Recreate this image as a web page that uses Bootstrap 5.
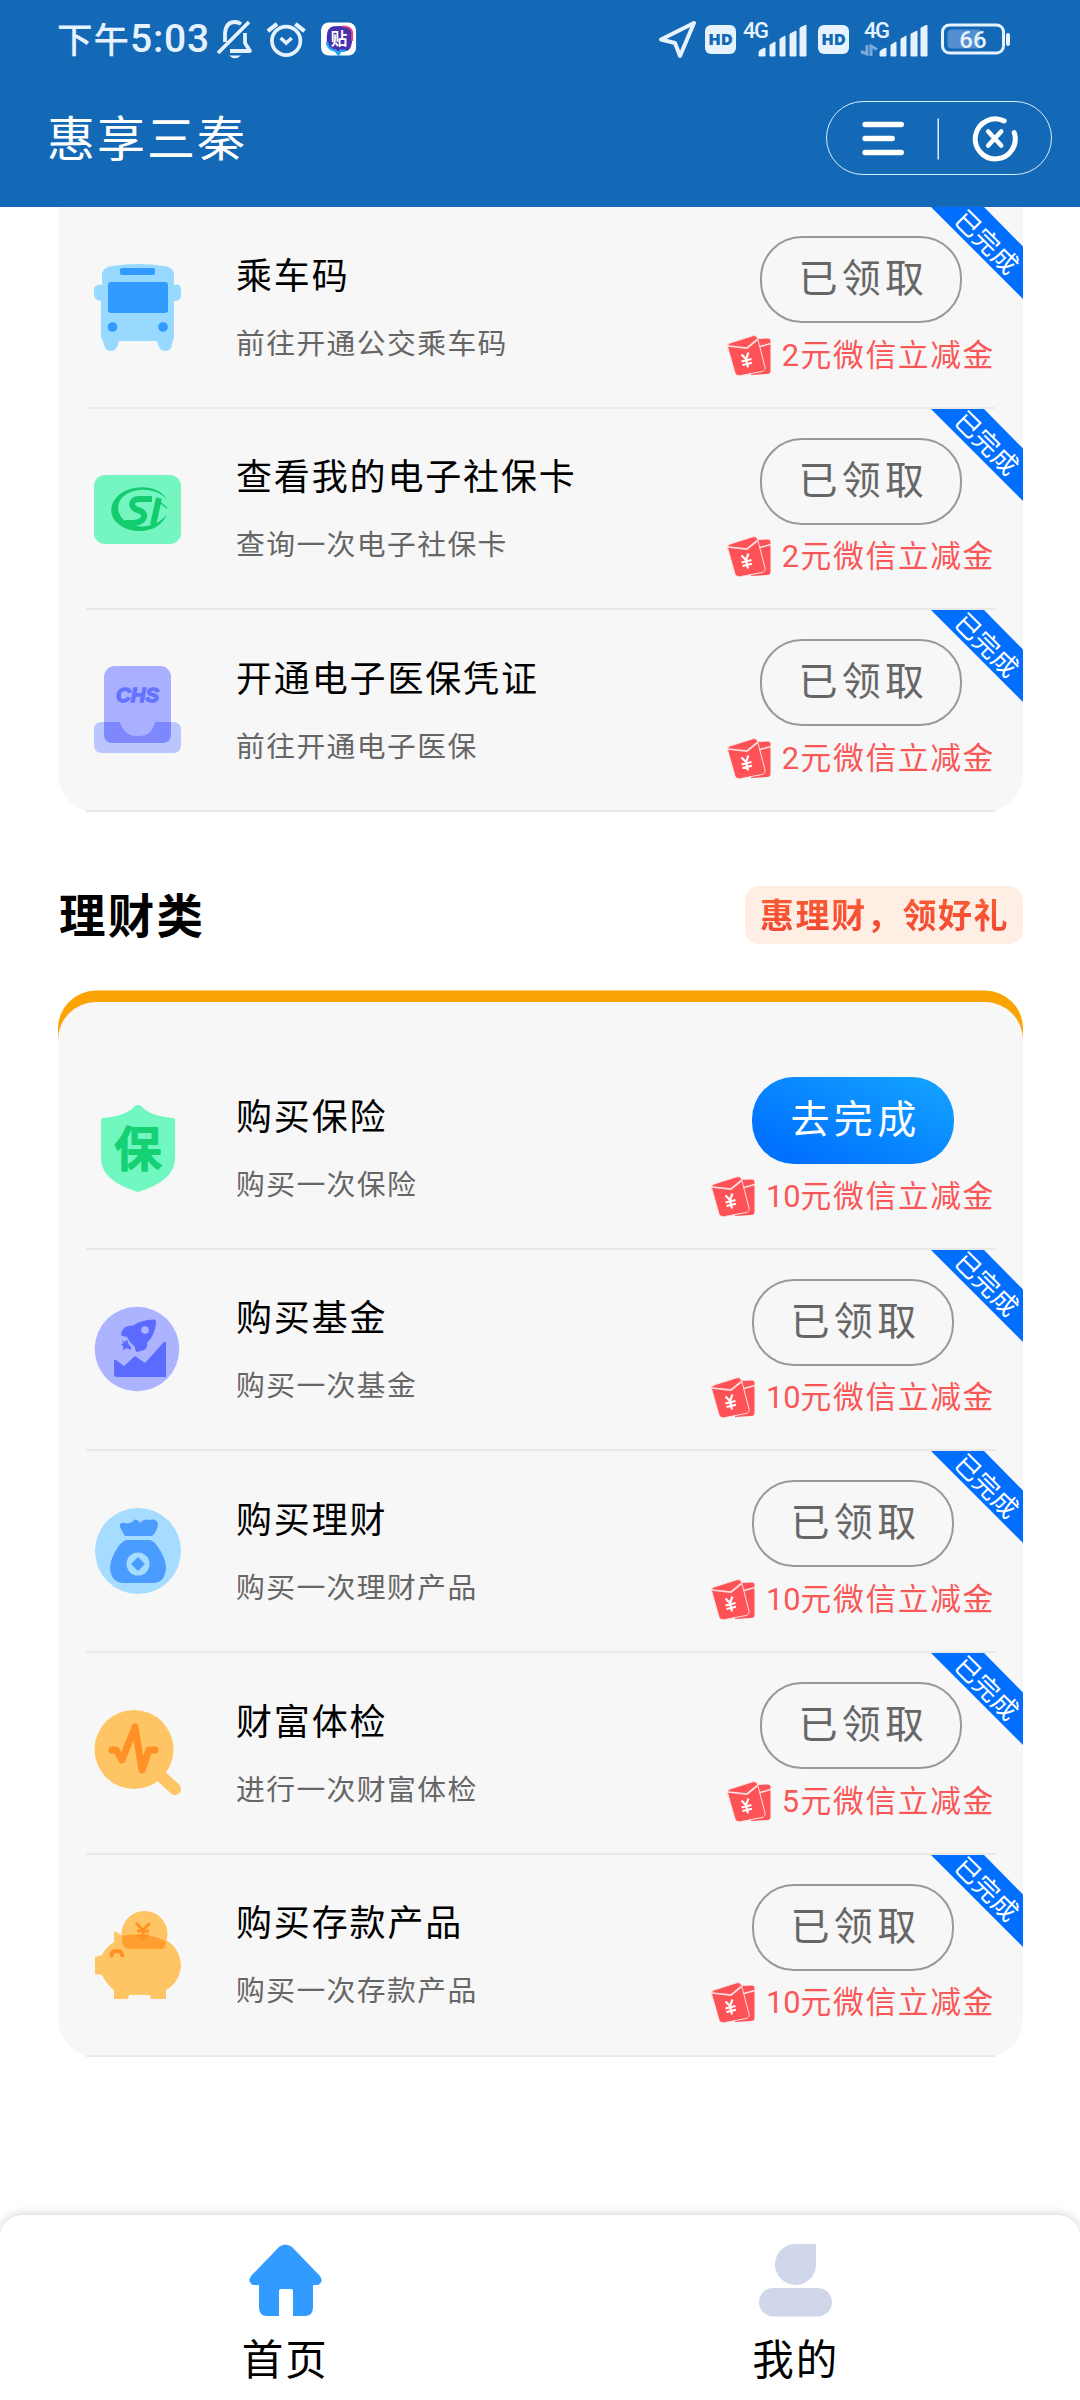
<!DOCTYPE html>
<html lang="zh-CN">
<head>
<meta charset="utf-8">
<meta name="viewport" content="width=device-width, initial-scale=1">
<title>惠享三秦</title>
<link href="https://cdn.jsdelivr.net/npm/bootstrap@5.3.0/dist/css/bootstrap.min.css" rel="stylesheet">
<style>
body{font-family:"Noto Sans CJK SC",sans-serif;color:#000;background:#fff;line-height:1;width:1080px;height:2400px;overflow:hidden}
svg{display:block;flex:none;overflow:visible}
.app-top{background:#1369b6;height:207px;color:#fff;flex:none}
.status-row{height:78px;padding:0 68px 0 57px;color:#e6f2fe}
.clock-zh{font-size:35.5px;font-weight:500;letter-spacing:1px;padding-bottom:2px}
.clock-num{font-family:Roboto,sans-serif;font-size:39px;letter-spacing:.8px;font-weight:500}
.hd-chip{width:31px;height:29px;border-radius:6px;background:#e6f2fe;color:#1369b6;font:800 16.5px/28px "Open Sans",sans-serif;text-align:center}
.title-row{height:120px;padding:0 28px 0 47px}
.app-title{font-size:48px;letter-spacing:2px;font-weight:400;padding-bottom:5px}
.capsule{width:226px;height:74px;border:1.5px solid #d5ecff;border-radius:37px}
.task-panel{margin:0 57px 0 58px;background:#f7f7f7}
.panel-first{border-radius:0 0 38px 38px}
.panel-finance{margin-top:58px;box-shadow:0 -11.5px 0 #faa302;border-radius:38px;padding-top:46px}
.task-row{height:201.7px;padding:0 28px}
.task-body{height:100%;border-bottom:2px solid #e9e9e9;padding-left:8px}
.task-ic{margin-top:56px}
.task-text{margin-left:54px;padding-top:44.5px}
.task-name{font-size:36px;line-height:42px;letter-spacing:1.85px}
.task-desc{font-size:28.8px;line-height:36px;letter-spacing:1.4px;color:#666;margin-top:30px}
.task-side{padding-top:29px}
.pill{width:202px;height:87px;border-radius:42px;padding:0 0 9px 5px;font-size:39px;letter-spacing:4.3px;line-height:70px;border:2px solid #999;color:#666;background:transparent;display:block}
.pill-go{border:0;color:#fff;background:linear-gradient(25deg,#0071ff 15%,#13a2ff 95%)}
.reward{font-family:Roboto,"Noto Sans CJK SC",sans-serif;color:#fa5757;font-size:30.8px;letter-spacing:1.6px;margin-top:11.5px;height:42px;line-height:42px}
.reward-wide{letter-spacing:0}
.reward-wide span{letter-spacing:1.6px}
.ribbon{top:0;right:0;width:92px;height:92px}
.ribbon span{left:17.500px;top:20.500px;width:78px;height:26px;line-height:26px;text-align:center;transform:rotate(45deg);color:#fff;font-size:25.5px;letter-spacing:.5px;white-space:nowrap}
.section-head{margin:74px 57px 0 59px;height:58px}
.section-name{font-size:46.5px;letter-spacing:2.2px;font-weight:700;padding-bottom:4px}
.slogan{width:278px;height:58px;border-radius:14px;background:#ffeee4;font-size:34px;letter-spacing:1.6px;font-weight:700;line-height:56px;padding-left:15px}
.slogan span{background:linear-gradient(#fb6133,#f24434);-webkit-background-clip:text;background-clip:text;color:transparent}
.tabs{height:185px;border-radius:22px 22px 0 0;box-shadow:0 -2px 8px rgba(0,0,0,.15);padding:0 29px 0 30px;background:#fff}
.tab{padding-top:29px;font-size:41.5px;letter-spacing:2px}
.tab span{line-height:50px;margin-top:15px}
</style>
<script src="https://cdn.jsdelivr.net/npm/bootstrap@5.3.0/dist/js/bootstrap.bundle.min.js"></script>
</head>
<body class="d-flex flex-column">
<svg width="0" height="0" class="position-absolute">
 <symbol id="packet" viewBox="0 0 44 42">
  <path d="M27 4L41 3.500Q43.500 3.500 43.500 6V36Q43.500 39 40 39L24 40Z" fill="#ff5257"/>
  <path d="M31 12L44 8.500" stroke="#fbe3e3" stroke-width="1.500"/>
  <path d="M3 8L26 .7Q29.500 0 30.500 3L38 32Q38.700 35.500 35 36.500L12.500 40.800Q9 41 8 38L.6 12Q0 9 3 8Z" fill="#ff5257" stroke="#fbe3e3" stroke-width="1"/>
  <path d="M1 11L20 13L30.500 4.500" fill="none" stroke="#fbe3e3" stroke-width="1.700"/>
  <path d="M14.500 19.500L19 24L21.500 17.500M14.500 26.500L24.500 24M15.500 30L25 27.700M19 24L21 32.500" fill="none" stroke="#fff" stroke-width="2.100"/>
 </symbol>
 <symbol id="band" viewBox="0 0 92 92"><path d="M0 0H53L92 39.500V92Z" fill="#006fff"/></symbol>
 <symbol id="bars" viewBox="0 0 49 32">
  <path d="M1 31V27Q1 25 7 23V31ZM12 31V20L17 17V31ZM22 31V14L27 11V31ZM32 31V9L38 6V31ZM42 31V3L48 0V31Z" fill="#e6f2fe" stroke="#e6f2fe" stroke-linejoin="round"/>
 </symbol>
</svg>

<header class="app-top">
 <div class="status-row d-flex align-items-center">
  <span class="clock-zh">下午</span><span class="clock-num">5:03</span>
  <svg class="ms-2" width="36" height="40" viewBox="1 0 36 40" fill="none" stroke="#e6f2fe" stroke-width="3.800" stroke-linejoin="round"><path d="M8 23V14Q9 3 18 3Q21 3 24 5M28 14V24L33 32H13"/><path d="M1 34L32 3"/><path d="M12 36.500H24Q18 42 12 36.500Z" fill="#e6f2fe" stroke="none"/></svg>
  <svg class="ms-2 ps-1" width="48" height="40" viewBox="2 0 48 40" fill="none" stroke="#e6f2fe" stroke-width="4"><circle cx="24" cy="22" r="15.500"/><path d="M4 11.500L14 3.500M34 3.500L44 11.500" stroke-width="4.500"/><path d="M18 19L24 24.500L30 19" stroke-width="3.800"/></svg>
  <svg class="ms-2 ps-1" width="40" height="36" viewBox="3 0 37 36"><rect x="2" y="1" width="36" height="34" rx="8" fill="#fff"/><path d="M15 5Q33 3 34 10Q35 28 29 30L20 31L13 29Q7 27 8 15Q8 6 15 5Z" fill="#4931ad"/><path d="M24 5Q34 5 34 12V20" fill="none" stroke="#e4487c" stroke-width="2"/><path d="M8 21Q9 29 17 30L20 34L22 30H27" fill="none" stroke="#20a6f2" stroke-width="2.500"/><text x="20.500" y="24" font-size="17" text-anchor="middle" fill="#fff" font-weight="700" font-family="Noto Sans CJK SC">贴</text></svg>
  <div class="d-flex align-items-center ms-auto">
   <svg width="40" height="40" viewBox="-1 0 40 40"><path d="M3 20.500L36 4L22 37L17 24Z" fill="none" stroke="#e6f2fe" stroke-width="4" stroke-linejoin="round"/></svg>
   <div class="hd-chip ms-2">HD</div>
   <svg class="ms-1" width="70" height="40" viewBox="-1 0 70 40"><text x="2" y="18.500" font-size="22" font-weight="500" fill="#e6f2fe" font-family="Roboto" textLength="26">4G</text><use href="#bars" x="17" y="6" width="49" height="32"/></svg>
   <div class="hd-chip ms-2">HD</div>
   <svg class="ms-2 ps-1" width="75" height="40" viewBox="2 0 71 40"><text x="5" y="18.500" font-size="22" font-weight="500" fill="#e6f2fe" font-family="Roboto" textLength="26">4G</text><path d="M8 26V35L2 32.500M12 37V27L18 30.500" fill="none" stroke="#78abd7" stroke-width="3"/><use href="#bars" x="20" y="6" width="49" height="32"/></svg>
   <svg class="ms-2" width="72" height="32" viewBox="-1 0 72 32"><rect x="1.500" y="2" width="61" height="28" rx="7" fill="none" stroke="#e6f2fe" stroke-width="3"/><path d="M11 6.500H39V25.500H11Q6.500 25.500 6.500 21V11Q6.500 6.500 11 6.500Z" fill="#528fd0"/><path d="M67 12V21" stroke="#e6f2fe" stroke-width="4" stroke-linecap="round"/><text x="32" y="24.500" text-anchor="middle" fill="#e6f2fe" font-size="24" font-weight="500" font-family="Roboto">66</text></svg>
  </div>
 </div>
 <div class="title-row d-flex align-items-center justify-content-between">
  <h1 class="app-title m-0">惠享三秦</h1>
  <div class="capsule d-flex align-items-center">
   <svg width="223" height="71" viewBox="1.300 1.500 223 71" fill="none" stroke="#fff"><path d="M39.500 23H75.500M39.500 37H66.500M39.500 51H75.500" stroke-width="5.600" stroke-linecap="round"/><path d="M112.500 17V58" stroke-width="1.300"/><path d="M178.500 19.500A20 20 0 1 0 188.500 31" stroke-width="5" stroke-linecap="round"/><path d="M162.500 30L175.500 44M175.500 30L162.500 44" stroke-width="4.600" stroke-linecap="round"/></svg>
  </div>
 </div>
</header>

<main>
 <section class="task-panel panel-first">
  <div class="task-row position-relative"><div class="task-body d-flex">
   <svg class="task-ic" width="88" height="90" viewBox="0 0 88 90"><path d="M8 10Q10 4 18 3Q44-1 70 3Q78 4 80 10V22Q87 20 87 27V33Q87 38 80 38V74L78 81Q78 88 71 88Q65 88 63 78H25Q23 88 17 88Q11 88 10 81L7 74V38Q0 37 0 31V26Q1 21 8 22Z" fill="#97d9ff"/><rect x="26" y="5" width="35" height="7" rx="2" fill="#329bff"/><rect x="14" y="19" width="60" height="31" rx="3" fill="#329bff"/><circle cx="18.500" cy="64" r="4.800" fill="#329bff"/><circle cx="69" cy="64" r="4.800" fill="#329bff"/></svg>
   <div class="task-text"><div class="task-name">乘车码</div><div class="task-desc">前往开通公交乘车码</div></div>
   <div class="task-side ms-auto d-flex flex-column align-items-center"><button class="btn pill">已领取</button><div class="reward d-flex"><svg class="me-2" width="47" height="42" viewBox="0 0 47 42"><use href="#packet" width="44" height="42"/></svg>2元微信立减金</div></div>
  </div><div class="ribbon position-absolute"><svg width="92" height="92"><use href="#band"/></svg><span class="position-absolute">已完成</span></div></div>

  <div class="task-row position-relative"><div class="task-body d-flex">
   <svg class="task-ic" width="88" height="90" viewBox="0 0 88 90"><rect x="0" y="10" width="87" height="69" rx="11" fill="#75f5c0"/><path d="M73 35C66 19 34 18 22 33C10 48 22 64 43 66C57 67 69 60 73 49C65 61 46 65 34 58C19 49 22 32 37 27C50 22 67 26 73 35Z" fill="#13cc70"/><path d="M58 34H45C36 34 36 43 44 45C55 48 50 58 39 58H31" fill="none" stroke="#13cc70" stroke-width="6"/><path d="M65 33L59 60" stroke="#13cc70" stroke-width="6"/><path d="M62 34L73 43" stroke="#13cc70" stroke-width="1.500"/></svg>
   <div class="task-text"><div class="task-name">查看我的电子社保卡</div><div class="task-desc">查询一次电子社保卡</div></div>
   <div class="task-side ms-auto d-flex flex-column align-items-center"><button class="btn pill">已领取</button><div class="reward d-flex"><svg class="me-2" width="47" height="42" viewBox="0 0 47 42"><use href="#packet" width="44" height="42"/></svg>2元微信立减金</div></div>
  </div><div class="ribbon position-absolute"><svg width="92" height="92"><use href="#band"/></svg><span class="position-absolute">已完成</span></div></div>

  <div class="task-row position-relative"><div class="task-body d-flex">
   <svg class="task-ic" width="88" height="90" viewBox="0 1 88 90"><rect x="10" y="1" width="67" height="77" rx="11" fill="#a9b0ff"/><path d="M8 57H26Q30 71 44 71Q58 71 61 57H79Q87 57 87 65V80Q87 88 79 88H8Q0 88 0 80V65Q0 57 8 57Z" fill="#bbc6ff"/><path d="M10 57H26Q30 71 44 71Q58 71 61 57H77V69Q77 78 68 78H19Q10 78 10 69Z" fill="#7d88ff"/><text x="43.500" y="37" text-anchor="middle" textLength="43" lengthAdjust="spacingAndGlyphs" font-family="Liberation Sans" font-style="italic" font-weight="700" font-size="20" fill="#6472ff" stroke="#6472ff" stroke-width="1.300">CHS</text></svg>
   <div class="task-text"><div class="task-name">开通电子医保凭证</div><div class="task-desc">前往开通电子医保</div></div>
   <div class="task-side ms-auto d-flex flex-column align-items-center"><button class="btn pill">已领取</button><div class="reward d-flex"><svg class="me-2" width="47" height="42" viewBox="0 0 47 42"><use href="#packet" width="44" height="42"/></svg>2元微信立减金</div></div>
  </div><div class="ribbon position-absolute"><svg width="92" height="92"><use href="#band"/></svg><span class="position-absolute">已完成</span></div></div>
 </section>

 <div class="section-head d-flex align-items-center justify-content-between">
  <h2 class="section-name m-0">理财类</h2>
  <div class="slogan"><span>惠理财，领好礼</span></div>
 </div>

 <section class="task-panel panel-finance">
  <div class="task-row position-relative"><div class="task-body d-flex">
   <svg class="task-ic" width="88" height="90" viewBox="0 0 88 90"><path d="M44 1Q47 1 50 5Q61 13 79 14Q81 14 81 17V54Q81 77 44 88Q7 77 7 54V17Q7 14 9 14Q27 13 38 5Q41 1 44 1Z" fill="#71f7c0"/><text x="44" y="61.500" text-anchor="middle" font-size="47" font-weight="500" font-family="Noto Sans CJK SC" fill="#15d174" stroke="#15d174" stroke-width="2" stroke-linejoin="round">保</text></svg>
   <div class="task-text"><div class="task-name">购买保险</div><div class="task-desc">购买一次保险</div></div>
   <div class="task-side ms-auto d-flex flex-column align-items-center"><button class="btn pill pill-go">去完成</button><div class="reward reward-wide d-flex"><svg class="me-2" width="47" height="42" viewBox="0 0 47 42"><use href="#packet" width="44" height="42"/></svg>10<span>元微信立减金</span></div></div>
  </div></div>

  <div class="task-row position-relative"><div class="task-body d-flex">
   <svg class="task-ic" width="88" height="90" viewBox="0 0 88 90"><circle cx="43" cy="43" r="42.300" fill="#adb4ff"/><path d="M60 13.500Q62.500 13.500 62 17Q61 29 53 37Q54 42 50 44L43 46Q41 45.500 41 41L36 36L33 31L27 29.500Q27 22 34 20L39 19.500Q47 14 60 13.500Z" fill="#5b6bff"/><circle cx="51" cy="24" r="3.800" fill="#adb4ff"/><path d="M28 34L31 36L33 33.500L34.500 38L37 41L36.500 44L32.500 42L29 44.500L29.500 40.500L27 38.500L29.500 37Z" fill="#5b6bff"/><path d="M20 55Q20 53 22 54L30 60L41 50L51 57L69 37Q72 34 72 37V71H23Q20 71 20 68Z" fill="#5b6bff"/></svg>
   <div class="task-text"><div class="task-name">购买基金</div><div class="task-desc">购买一次基金</div></div>
   <div class="task-side ms-auto d-flex flex-column align-items-center"><button class="btn pill">已领取</button><div class="reward reward-wide d-flex"><svg class="me-2" width="47" height="42" viewBox="0 0 47 42"><use href="#packet" width="44" height="42"/></svg>10<span>元微信立减金</span></div></div>
  </div><div class="ribbon position-absolute"><svg width="92" height="92"><use href="#band"/></svg><span class="position-absolute">已完成</span></div></div>

  <div class="task-row position-relative"><div class="task-body d-flex">
   <svg class="task-ic" width="88" height="90" viewBox="0 0 88 90"><circle cx="44" cy="44" r="43" fill="#a6dcff"/><path d="M31 29Q28 25 26 20Q25 15 31 16Q37 17 40 13Q43 11 46 16Q50 11 55 13Q63 11 64 17Q63 25 58 29Z" fill="#4a9cff"/><path d="M33 33H56Q60 34 64 40Q72 52 72 61Q71 75 60 76H29Q17 75 16 61Q16 52 24 40Q29 33 33 33Z" fill="#4a9cff"/><circle cx="44" cy="57" r="11.500" fill="#a6dcff"/><path d="M44 50L51 57L44 64L37 57Z" fill="#4a9cff"/></svg>
   <div class="task-text"><div class="task-name">购买理财</div><div class="task-desc">购买一次理财产品</div></div>
   <div class="task-side ms-auto d-flex flex-column align-items-center"><button class="btn pill">已领取</button><div class="reward reward-wide d-flex"><svg class="me-2" width="47" height="42" viewBox="0 0 47 42"><use href="#packet" width="44" height="42"/></svg>10<span>元微信立减金</span></div></div>
  </div><div class="ribbon position-absolute"><svg width="92" height="92"><use href="#band"/></svg><span class="position-absolute">已完成</span></div></div>

  <div class="task-row position-relative"><div class="task-body d-flex">
   <svg class="task-ic" width="88" height="90" viewBox="0 0 88 90"><circle cx="40" cy="40.500" r="39.500" fill="#ffc464"/><path d="M68 68L81 80" stroke="#ffc464" stroke-width="12" stroke-linecap="round"/><path d="M18 41H22L28 51L41 18L48 61L55 41H61" fill="none" stroke="#ff9126" stroke-width="7" stroke-linecap="round" stroke-linejoin="round"/></svg>
   <div class="task-text"><div class="task-name">财富体检</div><div class="task-desc">进行一次财富体检</div></div>
   <div class="task-side ms-auto d-flex flex-column align-items-center"><button class="btn pill">已领取</button><div class="reward d-flex"><svg class="me-2" width="47" height="42" viewBox="0 0 47 42"><use href="#packet" width="44" height="42"/></svg>5元微信立减金</div></div>
  </div><div class="ribbon position-absolute"><svg width="92" height="92"><use href="#band"/></svg><span class="position-absolute">已完成</span></div></div>

  <div class="task-row position-relative"><div class="task-body d-flex">
   <svg class="task-ic" width="88" height="90" viewBox="0 0 88 90"><circle cx="50.500" cy="23" r="23" fill="#ffc464"/><path d="M20 20L29 25Q41 21 56 24Q86 29 87 55Q85 72 72 79V88H57L56 84H35L34 88H20V79Q14 75 8 64L1 63V46L8 44Q11 37 20 31Z" fill="#ffc464"/><path d="M28 25Q49 20 72 30Q72 37 68 38H35Q30 38 28 31Z" fill="#ff9f30"/><path d="M42 12L49 19L56 12M43 20H55M43 25H55M49 19V30" stroke="#ff9126" stroke-width="3" fill="none"/><path d="M18 46Q16 40 23 40Q29 40 28 46" fill="none" stroke="#ff9126" stroke-width="4"/></svg>
   <div class="task-text"><div class="task-name">购买存款产品</div><div class="task-desc">购买一次存款产品</div></div>
   <div class="task-side ms-auto d-flex flex-column align-items-center"><button class="btn pill">已领取</button><div class="reward reward-wide d-flex"><svg class="me-2" width="47" height="42" viewBox="0 0 47 42"><use href="#packet" width="44" height="42"/></svg>10<span>元微信立减金</span></div></div>
  </div><div class="ribbon position-absolute"><svg width="92" height="92"><use href="#band"/></svg><span class="position-absolute">已完成</span></div></div>
 </section>
</main>

<nav class="tabs d-flex mt-auto flex-shrink-0">
 <div class="tab flex-fill w-50 d-flex flex-column align-items-center">
  <svg width="73" height="73" viewBox="0 0 73 73"><path d="M30 3Q36-2 43 3L71 32Q75 38 69 41H64V63Q64 72 56 72H44V47Q44 45 42 45H32Q30 45 30 47V72H18Q10 72 10 63V41H4Q-2 38 2 32Z" fill="#329bff"/></svg>
  <span>首页</span>
 </div>
 <div class="tab flex-fill w-50 d-flex flex-column align-items-center">
  <svg width="73" height="73" viewBox="0 0 73 73"><path d="M57 0V20A20.500 20.500 0 1 1 36 0Z" fill="#d1d7eb"/><rect x="0" y="44" width="73" height="28.500" rx="14.200" fill="#d1d7eb"/></svg>
  <span>我的</span>
 </div>
</nav>
</body>
</html>
